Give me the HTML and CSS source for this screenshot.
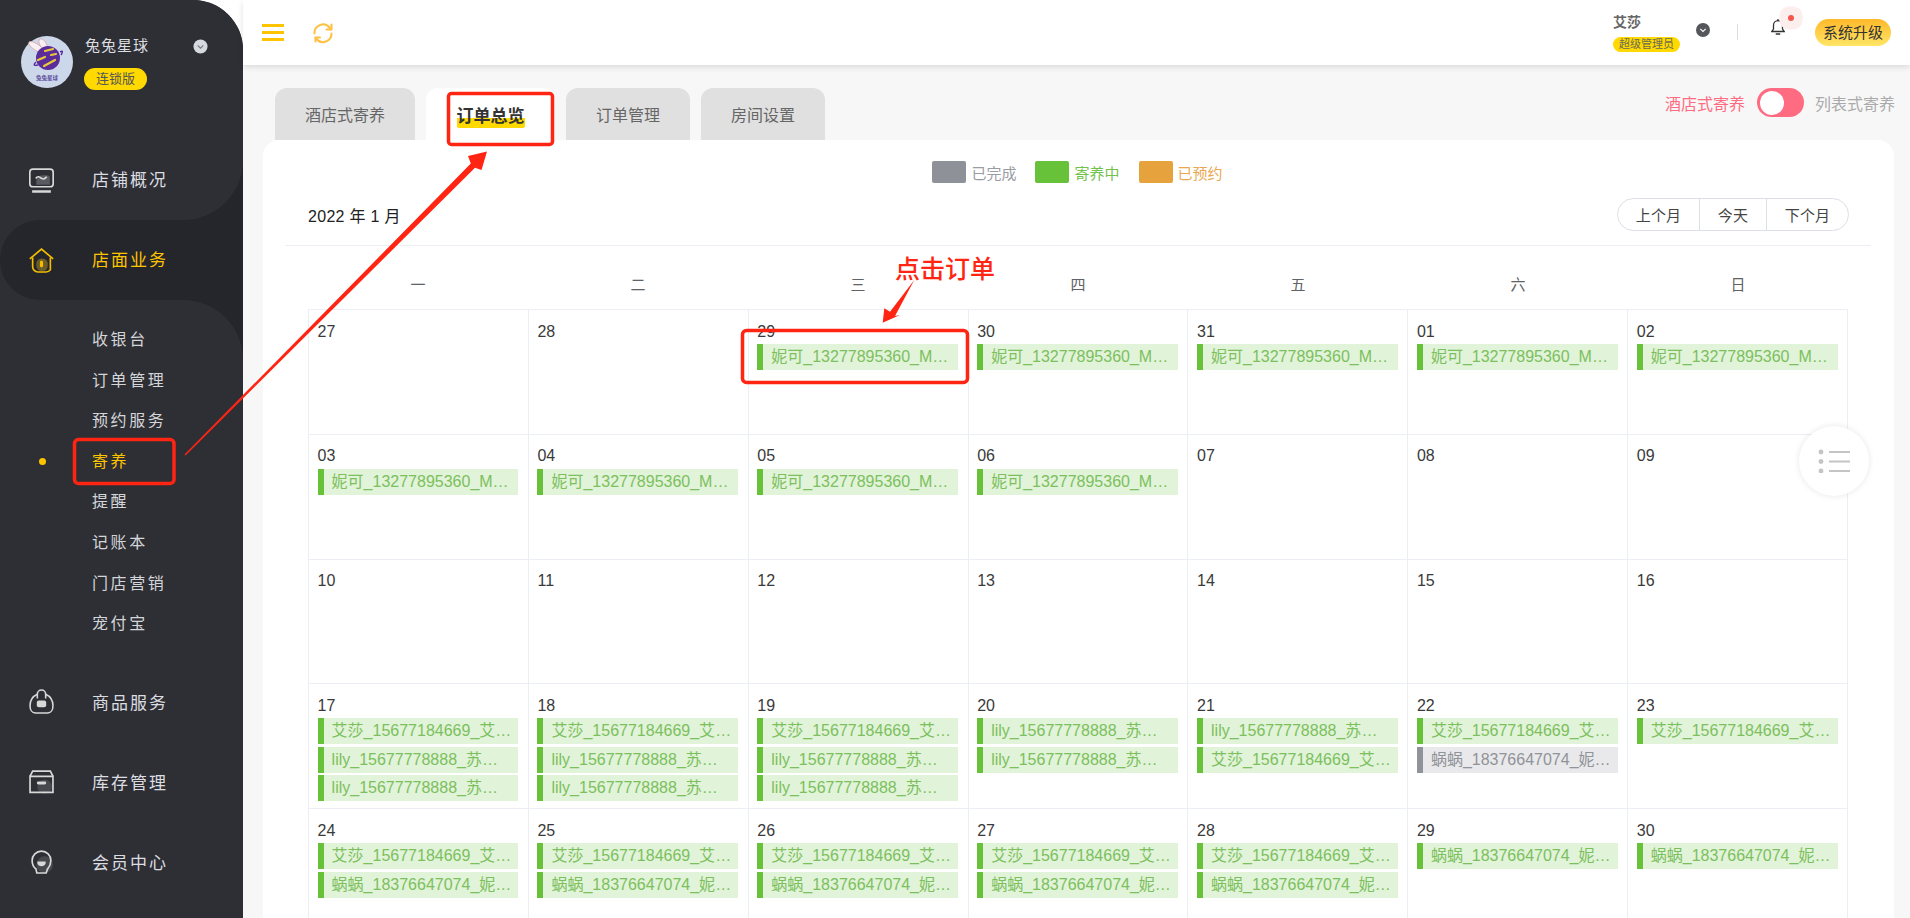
FILE: index.html
```html
<!DOCTYPE html>
<html lang="zh-CN">
<head>
<meta charset="utf-8">
<title>订单总览</title>
<link rel="stylesheet" href="styles.css">
</head>
<body>
<div class="app">
  <aside class="sidebar">
    <div class="top-block">
      <div class="brand">
        <svg class="avatar" viewBox="0 0 52 52">
          <circle cx="26" cy="26" r="26" fill="#cdd7ea"/>
          <path d="M25 15C19 9 11 4 8 6c-2 3 6 9 14 12z" fill="#f7f0f2" stroke="#d9a0a8" stroke-width=".8"/>
          <path d="M27 12C25 6 22 2 19 3c-3 2 0 8 5 11z" fill="#f7f0f2" stroke="#d9a0a8" stroke-width=".8"/>
          <circle cx="27" cy="22" r="12" fill="#5b2d9b"/>
          <path d="M17 24l7-3M24 15l8-2M23 30l11-6M30 19l5-1" stroke="#e9c83a" stroke-width="2.200" stroke-linecap="round" fill="none"/>
          <path d="M15 26c-3 3-2 4 2 3M39 16c3-2 3 0 1 3" stroke="#5b2d9b" stroke-width="1.400" fill="none"/>
          <text class="avatar-text" x="26" y="44" text-anchor="middle">兔兔星球</text>
        </svg>
        <div class="brand-info">
          <div class="brand-name">兔兔星球</div>
          <span class="brand-badge">连锁版</span>
        </div>
        <svg class="brand-chevron" viewBox="0 0 16 16"><circle cx="8" cy="8" r="7.500" fill="#d5d9e0"/><path d="M5 6.800l3 3 3-3" fill="none" stroke="#777" stroke-width="1.200"/></svg>
      </div>
      <div class="nav-item nav-item-raised">
        <svg class="nav-icon" viewBox="0 0 24 24" fill="none" stroke="#d8d8d8" stroke-width="1.600">
          <path d="M10 16h10v-6a3 3 0 0 0-3-3h-3a6 6 0 0 0-7 6v3z" fill="#5a5b60" stroke="none"/>
          <rect x=".8" y="1" width="22.400" height="17" rx="3"/>
          <path d="M6.500 10c2-3 4-1 5.500 0s3 1 5-1.500"/>
          <path d="M3 22.500h18" stroke-width="2.400"/>
        </svg>
        <span>店铺概况</span>
      </div>
    </div>
    <div class="active-wrap">
      <div class="nav-item nav-item-raised nav-item-active">
        <svg class="nav-icon" viewBox="0 0 24 24" fill="none" stroke="#f5bd00" stroke-width="1.600">
          <rect x="7" y="10" width="11" height="12" rx="5" fill="#6b5c2a" stroke="none"/>
          <path d="M.8 10.500L12 1l11.200 9.500"/>
          <path d="M3.500 9v9a5 5 0 0 0 5 5h8a5 5 0 0 0 4-2v-12"/>
          <rect x="10.500" y="12" width="3" height="6.500" rx="1.500" fill="#f5bd00" stroke="none"/>
        </svg>
        <span>店面业务</span>
      </div>
    </div>
    <div class="sub-block">
      <ul class="sub-list">
        <li class="sub-item">收银台</li>
        <li class="sub-item">订单管理</li>
        <li class="sub-item">预约服务</li>
        <li class="sub-item sub-item-active">寄养</li>
        <li class="sub-item">提醒</li>
        <li class="sub-item">记账本</li>
        <li class="sub-item">门店营销</li>
        <li class="sub-item">宠付宝</li>
      </ul>
      <div class="nav-item">
        <svg class="nav-icon" viewBox="0 0 24 24" fill="none" stroke="#d8d8d8" stroke-width="1.500">
          <path d="M8 5C3.500 7 1 11 1 16c0 4 2 7 5 7h12c3 0 5-3 5-7 0-5-2.500-9-7-11"/>
          <path d="M8 9V5a4 4 0 0 1 8 0v4"/>
          <rect x="7.500" y="11" width="9" height="6.500" rx="2" fill="#d8d8d8" stroke="none"/>
        </svg>
        <span>商品服务</span>
      </div>
      <div class="nav-item">
        <svg class="nav-icon" viewBox="0 0 24 24" fill="none" stroke="#d8d8d8" stroke-width="1.600">
          <circle cx="15" cy="17" r="7" fill="#48494e" stroke="none"/>
          <path d="M1 7l2.500-5h17L23 7"/>
          <path d="M1 7h22v15.500H1z"/>
          <rect x="7.500" y="12" width="9" height="2.800" rx="1.400" fill="#d8d8d8" stroke="none"/>
        </svg>
        <span>库存管理</span>
      </div>
      <div class="nav-item">
        <svg class="nav-icon" viewBox="0 0 24 24" fill="none" stroke="#d8d8d8" stroke-width="1.600">
          <circle cx="15" cy="15" r="8" fill="#48494e" stroke="none"/>
          <path d="M6.500 19C3.500 16.500 3 13.500 3 11a9 9 0 0 1 18 0c0 3-1 5.500-3 8"/>
          <path d="M6.500 18.500l1 4.500h9l1.500-4.500"/>
          <path d="M8 12h8v1.500c0 4-8 4-8 0z" fill="#d8d8d8" stroke="none"/>
        </svg>
        <span>会员中心</span>
      </div>
    </div>
  </aside>

  <div class="main">
    <header class="topbar">
      <div class="topbar-left">
        <div class="burger"><i></i><i></i><i></i></div>
        <svg class="refresh" viewBox="0 0 22 22" fill="none" stroke="#fdc040" stroke-width="2" stroke-linecap="round" stroke-linejoin="round">
          <path d="M2.500 11.500a8.500 8.500 0 0 1 15-6l1.500 2"/>
          <path d="M19.500 2.500v5h-5"/>
          <path d="M19.500 11.500a8.500 8.500 0 0 1-15 5.500l-1-1.500"/>
          <path d="M8 15.500H3.500v4"/>
        </svg>
      </div>
      <div class="topbar-right">
        <div class="user">
          <div class="user-name">艾莎</div>
          <span class="user-role">超级管理员</span>
        </div>
        <svg class="user-chevron" viewBox="0 0 14 14"><circle cx="7" cy="7" r="7" fill="#55565c"/><path d="M4.300 5.800L7 8.500l2.700-2.700" fill="none" stroke="#fff" stroke-width="1.100"/></svg>
        <div class="divider"></div>
        <div class="bell">
          <svg class="bell-icon" viewBox="0 0 14 16" fill="none" stroke="#333" stroke-width="1.300">
            <path d="M.8 12.500h12.400l-1.700-2.500V6.200a4.500 4.500 0 0 0-9 0V10z"/>
            <path d="M7 .5v1.200M5.200 15h3.600" stroke-linecap="round"/>
          </svg>
          <span class="bell-badge"></span>
        </div>
        <button class="upgrade">系统升级</button>
      </div>
    </header>

    <div class="content">
      <div class="tabs-row">
        <div class="tabs">
          <div class="tab">酒店式寄养</div>
          <div class="tab tab-active"><span class="tab-mark">订单总览</span></div>
          <div class="tab">订单管理</div>
          <div class="tab">房间设置</div>
        </div>
        <div class="mode">
          <span class="mode-on">酒店式寄养</span>
          <span class="switch"><span class="switch-knob"></span></span>
          <span class="mode-off">列表式寄养</span>
        </div>
      </div>

      <section class="card">
        <div class="legend">
          <span class="legend-item legend-done"><i></i>已完成</span>
          <span class="legend-item legend-stay"><i></i>寄养中</span>
          <span class="legend-item legend-book"><i></i>已预约</span>
        </div>
        <div class="cal-head">
          <div class="cal-title">2022 年 1 月</div>
          <div class="btn-group">
            <button class="btn btn-prev">上个月</button>
            <button class="btn btn-today">今天</button>
            <button class="btn btn-next">下个月</button>
          </div>
        </div>
        <div class="weekdays">
          <div>一</div><div>二</div><div>三</div><div>四</div><div>五</div><div>六</div><div>日</div>
        </div>
        <div class="grid">
          <div class="cell"><div class="date">27</div></div>
          <div class="cell"><div class="date">28</div></div>
          <div class="cell"><div class="date">29</div><div class="order">妮可_13277895360_Maomao</div></div>
          <div class="cell"><div class="date">30</div><div class="order">妮可_13277895360_Maomao</div></div>
          <div class="cell"><div class="date">31</div><div class="order">妮可_13277895360_Maomao</div></div>
          <div class="cell"><div class="date">01</div><div class="order">妮可_13277895360_Maomao</div></div>
          <div class="cell"><div class="date">02</div><div class="order">妮可_13277895360_Maomao</div></div>

          <div class="cell"><div class="date">03</div><div class="order">妮可_13277895360_Maomao</div></div>
          <div class="cell"><div class="date">04</div><div class="order">妮可_13277895360_Maomao</div></div>
          <div class="cell"><div class="date">05</div><div class="order">妮可_13277895360_Maomao</div></div>
          <div class="cell"><div class="date">06</div><div class="order">妮可_13277895360_Maomao</div></div>
          <div class="cell"><div class="date">07</div></div>
          <div class="cell"><div class="date">08</div></div>
          <div class="cell"><div class="date">09</div></div>

          <div class="cell"><div class="date">10</div></div>
          <div class="cell"><div class="date">11</div></div>
          <div class="cell"><div class="date">12</div></div>
          <div class="cell"><div class="date">13</div></div>
          <div class="cell"><div class="date">14</div></div>
          <div class="cell"><div class="date">15</div></div>
          <div class="cell"><div class="date">16</div></div>

          <div class="cell"><div class="date">17</div><div class="order">艾莎_15677184669_艾莎的猫</div><div class="order">lily_15677778888_苏苏的狗</div><div class="order">lily_15677778888_苏苏的狗</div></div>
          <div class="cell"><div class="date">18</div><div class="order">艾莎_15677184669_艾莎的猫</div><div class="order">lily_15677778888_苏苏的狗</div><div class="order">lily_15677778888_苏苏的狗</div></div>
          <div class="cell"><div class="date">19</div><div class="order">艾莎_15677184669_艾莎的猫</div><div class="order">lily_15677778888_苏苏的狗</div><div class="order">lily_15677778888_苏苏的狗</div></div>
          <div class="cell"><div class="date">20</div><div class="order">lily_15677778888_苏苏的狗</div><div class="order">lily_15677778888_苏苏的狗</div></div>
          <div class="cell"><div class="date">21</div><div class="order">lily_15677778888_苏苏的狗</div><div class="order">艾莎_15677184669_艾莎的猫</div></div>
          <div class="cell"><div class="date">22</div><div class="order">艾莎_15677184669_艾莎的猫</div><div class="order order-done">蜗蜗_18376647074_妮可的猫</div></div>
          <div class="cell"><div class="date">23</div><div class="order">艾莎_15677184669_艾莎的猫</div></div>

          <div class="cell"><div class="date">24</div><div class="order">艾莎_15677184669_艾莎的猫</div><div class="order">蜗蜗_18376647074_妮可的猫</div></div>
          <div class="cell"><div class="date">25</div><div class="order">艾莎_15677184669_艾莎的猫</div><div class="order">蜗蜗_18376647074_妮可的猫</div></div>
          <div class="cell"><div class="date">26</div><div class="order">艾莎_15677184669_艾莎的猫</div><div class="order">蜗蜗_18376647074_妮可的猫</div></div>
          <div class="cell"><div class="date">27</div><div class="order">艾莎_15677184669_艾莎的猫</div><div class="order">蜗蜗_18376647074_妮可的猫</div></div>
          <div class="cell"><div class="date">28</div><div class="order">艾莎_15677184669_艾莎的猫</div><div class="order">蜗蜗_18376647074_妮可的猫</div></div>
          <div class="cell"><div class="date">29</div><div class="order">蜗蜗_18376647074_妮可的猫</div></div>
          <div class="cell"><div class="date">30</div><div class="order">蜗蜗_18376647074_妮可的猫</div></div>
        </div>
      </section>
    </div>
  </div>
</div>

<div class="fab">
  <svg viewBox="0 0 32 24" fill="#c4c4c4">
    <circle cx="3" cy="3" r="2.400"/><circle cx="3" cy="12.500" r="2.400"/><circle cx="3" cy="22" r="2.400"/>
    <rect x="11" y="2" width="21" height="2"/><rect x="11" y="11.500" width="21" height="2"/><rect x="11" y="21" width="21" height="2"/>
  </svg>
</div>

<svg class="marks" viewBox="0 0 1910 918" fill="none" stroke="#ff2512" stroke-width="3.500">
  <rect x="448.500" y="93.500" width="104" height="51" rx="3"/>
  <rect x="74.500" y="439.500" width="99.500" height="44" rx="4"/>
  <rect x="742.500" y="330.500" width="225" height="52" rx="4"/>
  <polygon fill="#ff2512" stroke="none" points="185.500,455.500 475,167.800 481.500,170 487,151.500 468,156 470.800,163.600 184.500,454.500"/>
  <polygon fill="#ff2512" stroke="none" points="914.300,280 895,316 900,315 882.700,322.700 884.300,308.300 890,311.700"/>
</svg>
<div class="note">点击订单</div>
</body>
</html>
```
FILE: styles.css
```css
* { box-sizing: border-box; }
html, body { margin: 0; height: 918px; overflow: hidden; background: #fff; }
body {
  position: relative;
  font-family: "Liberation Sans", "Noto Sans CJK SC", sans-serif;
  color: #333;
}
ul { list-style: none; margin: 0; padding: 0; }
button { font-family: inherit; border: 0; padding: 0; background: none; }

.app { display: flex; width: 1910px; height: 918px; }

/* sidebar */
.sidebar {
  width: 243px;
  flex: none;
  height: 918px;
  display: flex;
  flex-direction: column;
  background: #25262b;
  border-top-right-radius: 50px;
  overflow: hidden;
}
.top-block {
  height: 220px;
  display: flex;
  flex-direction: column;
  justify-content: space-between;
  background: #2e2f35;
  border-bottom-right-radius: 60px;
}
.brand { display: flex; padding: 36px 0 0 21px; }
.avatar { width: 52px; height: 52px; flex: none; }
.avatar-text { font-size: 5.500px; fill: #5a4a9c; font-weight: 700; }
.brand-info { margin-left: 12px; width: 108px; }
.brand-name { font-size: 15px; letter-spacing: 1px; line-height: 20px; color: #dcdde0; }
.brand-badge {
  display: inline-block;
  margin: 12px 0 0 -1px;
  width: 63px;
  height: 22px;
  line-height: 22px;
  text-align: center;
  border-radius: 11px;
  background: #ffd900;
  color: #555;
  font-size: 13px;
}
.brand-chevron { width: 15px; height: 15px; margin-top: 3px; flex: none; }

.nav-item {
  height: 80px;
  display: flex;
  align-items: center;
  padding-left: 29px;
  font-size: 17px;
  letter-spacing: 2px;
  color: #dcdde0;
}
.nav-item span { padding-bottom: 1px; }
.nav-item-raised span { padding-bottom: 3px; }
.nav-icon { width: 25px; height: 25px; flex: none; margin-right: 38px; }
.active-wrap { background: #2e2f35; }
.nav-item-active {
  background: #25262b;
  border-radius: 40px 0 0 40px;
  color: #ffc400;
}
.sub-block {
  flex: 1;
  background: #2e2f35;
  border-top-right-radius: 60px;
  padding-top: 20px;
}
.sub-list { margin-bottom: 17px; }
.sub-item {
  position: relative;
  height: 40.600px;
  line-height: 40.600px;
  padding-left: 92px;
  font-size: 16px;
  letter-spacing: 2.600px;
  color: #d5d6d9;
}
.sub-item-active { color: #ffc400; }
.sub-item-active::before {
  content: "";
  position: absolute;
  left: 39px;
  top: 16px;
  width: 7px;
  height: 7px;
  border-radius: 50%;
  background: #ffc400;
}

/* main */
.main { flex: 1; display: flex; flex-direction: column; min-width: 0; background: #f7f7f7; }
.topbar {
  height: 65px;
  flex: none;
  display: flex;
  justify-content: space-between;
  align-items: center;
  background: #fff;
  box-shadow: 0 2px 6px rgba(0, 0, 0, .12);
  padding: 0 19px;
  position: relative;
}
.topbar-left { display: flex; align-items: center; }
.burger { width: 22px; display: flex; flex-direction: column; gap: 4px; }
.burger i { display: block; height: 3px; background: #ffc400; }
.refresh { width: 22px; height: 22px; margin-left: 28px; }
.topbar-right { display: flex; align-items: center; }
.user { width: 83px; }
.user-name { font-size: 14px; line-height: 18px; font-weight: 700; color: #666; }
.user-role {
  display: block;
  margin-top: 6px;
  width: 67px;
  height: 15px;
  line-height: 15px;
  text-align: center;
  font-size: 11px;
  border-radius: 8px;
  background: #ffd900;
  color: #6b6a55;
}
.user-chevron { width: 14px; height: 14px; margin-top: -5px; }
.divider { width: 1px; height: 16px; margin: -2px 33px 0 27px; background: #ddd; }
.bell { position: relative; width: 14px; height: 16px; margin: -11px 30px 0 0; }
.bell-icon { display: block; width: 14px; height: 16px; }
.bell-badge {
  position: absolute;
  left: 17px;
  top: -4px;
  width: 6px;
  height: 6px;
  border-radius: 50%;
  background: #f5564c;
  box-shadow: 0 0 0 8.500px #fdeeee;
}
.upgrade {
  width: 76px;
  height: 27px;
  line-height: 27px;
  border-radius: 14px;
  font-size: 15px;
  color: #333;
  background: linear-gradient(#ffb92a, #ffe566);
}

.content { flex: 1; display: flex; flex-direction: column; padding: 23px 16px 0 20px; min-height: 0; }
.tabs-row { display: flex; justify-content: space-between; height: 52px; flex: none; }
.tabs { display: flex; gap: 11px; padding-left: 12px; }
.tab {
  height: 52px;
  line-height: 56px;
  padding: 0 30px;
  font-size: 16px;
  color: #666;
  background: #e0e0e0;
  border-radius: 12px 12px 0 0;
}
.tab-active {
  width: 129px;
  padding: 18px 30.500px 0;
  line-height: 22px;
  background: #fff;
  color: #333;
  font-size: 17px;
  font-weight: 700;
  white-space: nowrap;
}
.tab-mark {
  display: block;
  height: 22px;
  border-radius: 2px;
  background: linear-gradient(transparent 55%, #ffd900 55%);
}
.mode { display: flex; align-items: center; height: 29px; margin-right: -1px; font-size: 16px; }
.mode-on { color: #ff6b81; }
.mode-off { color: #aaa; }
.switch {
  width: 47px;
  height: 29px;
  margin: 0 11px 0 12px;
  padding: 2.500px 3px;
  border-radius: 15px;
  background: #ff6b81;
}
.switch-knob { display: block; width: 24px; height: 24px; border-radius: 50%; background: #fff; }

.card {
  flex: 1;
  min-height: 0;
  background: #fff;
  border-radius: 16px 16px 0 0;
  padding-top: 21px;
}
.legend { display: flex; justify-content: center; gap: 19px; height: 22px; padding-right: 2px; }
.legend-item { display: flex; align-items: center; gap: 5px; font-size: 15px; }
.legend-item i { display: block; width: 34px; height: 22px; border-radius: 2px; }
.legend-done { color: #9a9ca3; }
.legend-done i { background: #8f9199; }
.legend-stay { color: #72c24c; }
.legend-stay i { background: #67c23a; }
.legend-book { color: #e9a954; }
.legend-book i { background: #e6a23c; }

.cal-head {
  display: flex;
  justify-content: space-between;
  align-items: center;
  margin: 15px 23px 0 22px;
  padding: 0 22px 14px 23px;
  border-bottom: 1px solid #ebeef5;
}
.cal-title { font-size: 16px; letter-spacing: .3px; color: #222; }
.btn-group { display: flex; height: 33px; border: 1px solid #dcdfe6; border-radius: 17px; }
.btn { font-size: 15px; letter-spacing: .2px; color: #444; height: 31px; }
.btn-prev { width: 81px; }
.btn-today { width: 68px; border-left: 1px solid #dcdfe6; border-right: 1px solid #dcdfe6; }
.btn-next { width: 81px; }

.weekdays {
  display: grid;
  grid-template-columns: repeat(7, 1fr);
  width: 1540px;
  margin-left: 45px;
  height: 63px;
  padding-top: 14px;
  line-height: 50px;
  text-align: center;
  font-size: 15px;
  color: #606266;
}
.grid {
  display: grid;
  grid-template-columns: repeat(7, 1fr);
  grid-auto-rows: 124.750px;
  width: 1540px;
  margin-left: 45px;
  border-top: 1px solid #ebeef5;
  border-left: 1px solid #ebeef5;
}
.cell {
  padding: 11.500px 9.400px 0 8.600px;
  min-width: 0;
  border-right: 1px solid #ebeef5;
  border-bottom: 1px solid #ebeef5;
}
.date { font-size: 16px; line-height: 20px; color: #3a3a3a; margin-bottom: 2.500px; }
.order {
  height: 26px;
  line-height: 26px;
  margin-bottom: 2.500px;
  padding: 0 6px 0 8px;
  border-left: 6px solid #67c23a;
  background: #e1f3d8;
  color: #7cc05e;
  font-size: 16px;
  white-space: nowrap;
  overflow: hidden;
  text-overflow: ellipsis;
}
.order-done { border-left-color: #909399; background: #e9e9eb; color: #909399; }

/* overlays */
.fab {
  position: absolute;
  left: 1799px;
  top: 426px;
  width: 70px;
  height: 70px;
  display: flex;
  align-items: center;
  justify-content: center;
  border-radius: 50%;
  background: #fff;
  box-shadow: 0 0 6px rgba(0, 0, 0, .1);
}
.fab svg { width: 32px; height: 24px; }
.marks { position: absolute; left: 0; top: 0; width: 1910px; height: 918px; pointer-events: none; }
.note {
  position: absolute;
  left: 895px;
  top: 251px;
  font-family: "Noto Sans CJK SC", sans-serif;
  font-size: 25px;
  font-weight: 500;
  line-height: 32px;
  color: #ff2512;
}
```
